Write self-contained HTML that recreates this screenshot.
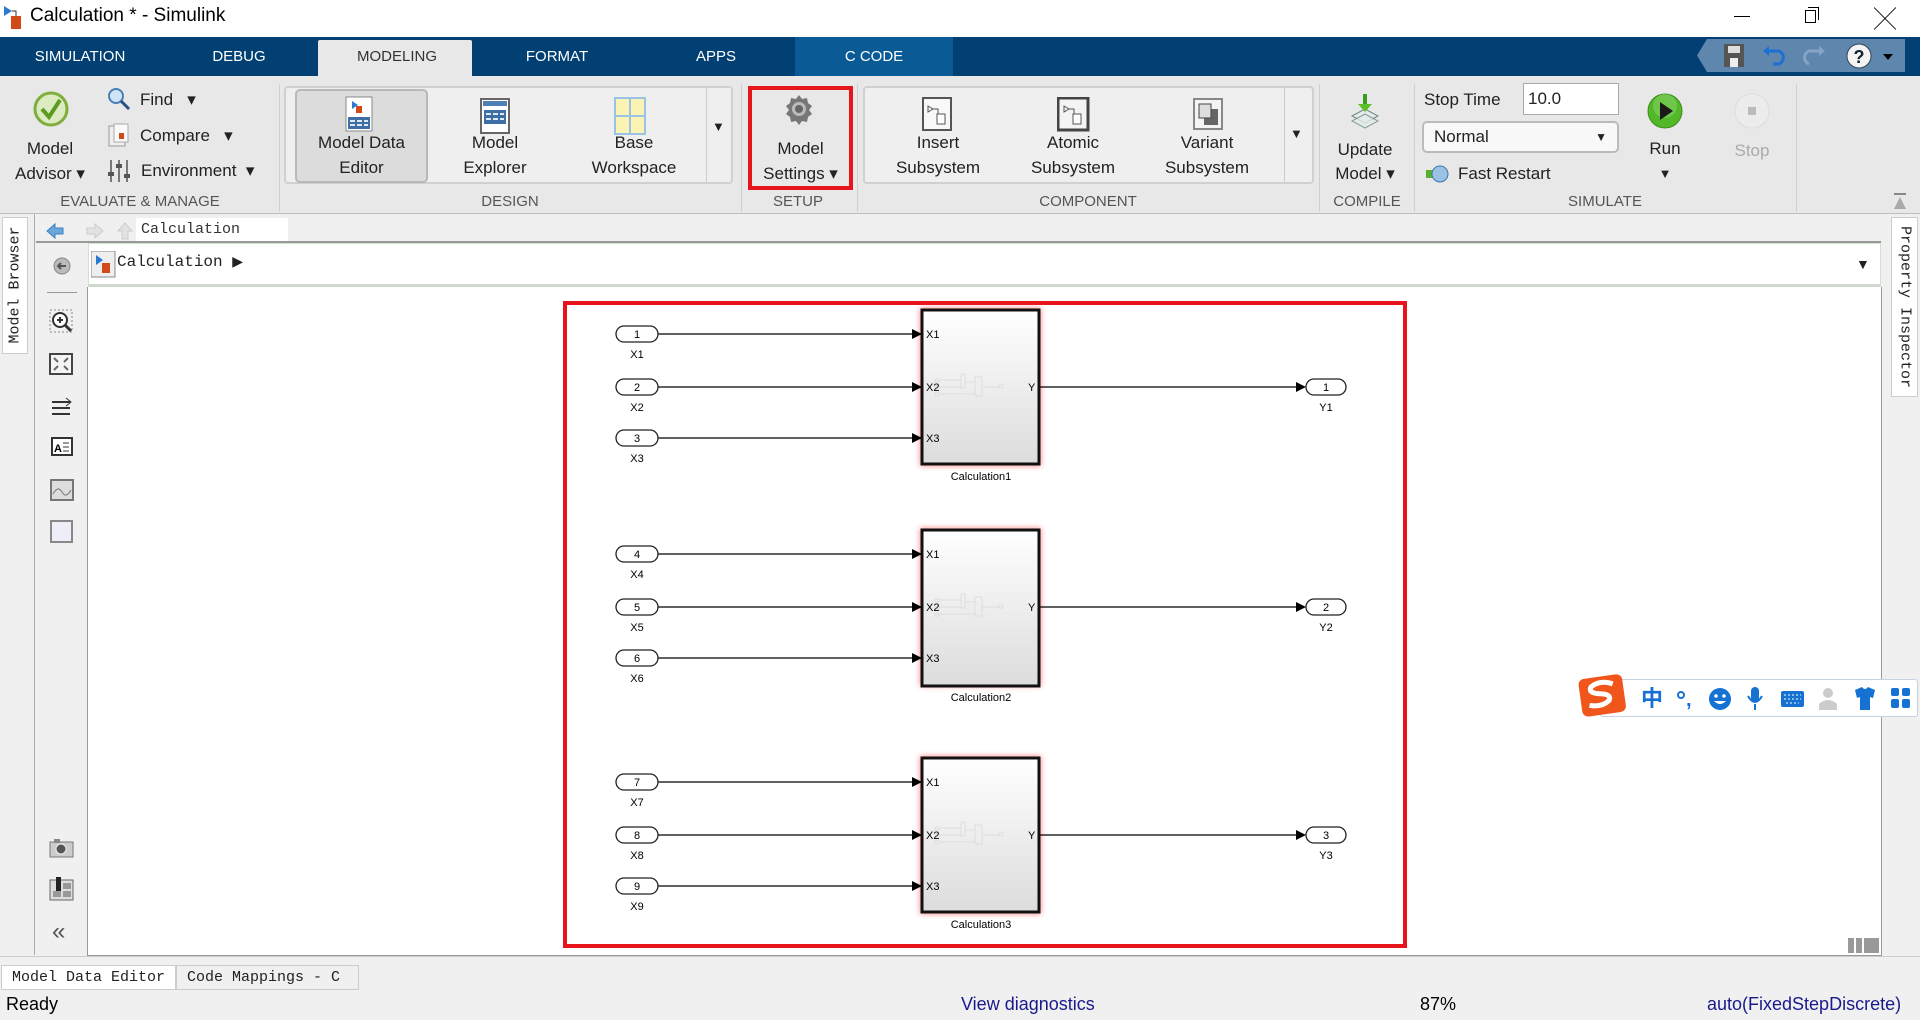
<!DOCTYPE html>
<html><head><meta charset="utf-8"><style>
*{margin:0;padding:0;box-sizing:border-box}
body{width:1920px;height:1020px;overflow:hidden;background:#f0f0f0;font-family:"Liberation Sans","Noto Sans CJK SC",sans-serif;position:relative;color:#222}
.a{position:absolute}
.t{position:absolute;font-size:17px;color:#222;text-align:center;line-height:24px;white-space:nowrap}
.lbl{position:absolute;top:193px;font-size:15px;color:#555;white-space:nowrap;transform:translateX(-50%)}
.tab{position:absolute;top:37px;height:39px;line-height:39px;color:#fff;font-size:15px;transform:translateX(-50%)}
.sep{position:absolute;top:84px;width:1px;height:128px;background:#d0d0d0}
.mono{font-family:"Liberation Mono",monospace}
</style></head><body>
<!-- title bar -->
<div class="a" style="left:0;top:0;width:1920px;height:37px;background:#fff"></div>
<svg class="a" style="left:2px;top:4px" width="24" height="26"><path d="M2 2 L10 7 L2 12Z" fill="#2a7ad0"/><rect x="9" y="12" width="10" height="13" fill="#d24a1a"/><path d="M10 7 H14 V12" stroke="#333" fill="none"/></svg>
<div class="a" style="left:30px;top:5px;font-size:19px;color:#000">Calculation * - Simulink</div>
<div class="a" style="left:1734px;top:16px;width:16px;height:1px;background:#000"></div>
<div class="a" style="left:1805px;top:10px;width:11px;height:13px;border:1px solid #000"></div>
<div class="a" style="left:1808px;top:7px;width:11px;height:13px;border-top:1px solid #000;border-right:1px solid #000"></div>
<div class="a" style="left:1874px;top:2px;font-size:22px;color:#000">╳</div>
<!-- tab bar -->
<div class="a" style="left:0;top:37px;width:1920px;height:39px;background:#023f72"></div>
<div class="a" style="left:318px;top:40px;width:154px;height:36px;background:#e8e8e8;border-radius:2px 2px 0 0"></div>
<div class="a" style="left:795px;top:37px;width:158px;height:39px;background:#0a5a96"></div>
<div class="tab" style="left:80px">SIMULATION</div>
<div class="tab" style="left:239px">DEBUG</div>
<div class="tab" style="left:397px;color:#333">MODELING</div>
<div class="tab" style="left:557px">FORMAT</div>
<div class="tab" style="left:716px">APPS</div>
<div class="tab" style="left:874px">C CODE</div>
<svg class="a" style="left:1697px;top:39px" width="220" height="35"><path d="M10 0 H208 V33 H10 L0 16.5Z" fill="#5f86ad"/>
<rect x="27" y="5" width="20" height="23" fill="#555"/><rect x="31" y="7" width="12" height="7" fill="#ddd"/><rect x="33" y="19" width="8" height="9" fill="#eee"/>
<path d="M70 12 H82 a7 7 0 0 1 0 13 H76" stroke="#1d6fd1" stroke-width="3" fill="none"/><path d="M66 12 L72 7 V17Z" fill="#1d6fd1"/>
<path d="M124 12 H112 a7 7 0 0 0 0 13" stroke="#85a5c6" stroke-width="3" fill="none"/><path d="M128 12 L122 7 V17Z" fill="#85a5c6"/>
<circle cx="162" cy="17" r="12" fill="#f4f4f4" stroke="#345" /><text x="162" y="24" font-size="18" font-weight="bold" text-anchor="middle" fill="#123">?</text>
<path d="M186 15 H196 L191 21Z" fill="#000"/></svg>
<!-- ribbon -->
<div class="a" style="left:0;top:76px;width:1920px;height:138px;background:#e8e8e8;border-bottom:1px solid #bdbdbd"></div>
<div class="sep" style="left:279px"></div><div class="sep" style="left:741px"></div><div class="sep" style="left:857px"></div><div class="sep" style="left:1319px"></div><div class="sep" style="left:1414px"></div><div class="sep" style="left:1796px"></div>
<svg class="a" style="left:33px;top:91px" width="36" height="36"><circle cx="18" cy="18" r="16" fill="#dcebc2" stroke="#7fae3c" stroke-width="3"/><path d="M9 18 L16 26 L27 9" stroke="#5c9c1f" stroke-width="4" fill="none"/></svg>
<div class="t" style="left:10px;top:137px;width:80px">Model</div>
<div class="t" style="left:4px;top:162px;width:92px">Advisor ▾</div>
<svg class="a" style="left:106px;top:86px" width="26" height="26"><circle cx="10" cy="10" r="7" fill="#cfe4f7" stroke="#4a7fb5" stroke-width="2"/><path d="M15 15 L23 23" stroke="#2a4f80" stroke-width="3"/></svg>
<div class="t" style="left:140px;top:88px;text-align:left">Find &nbsp;&nbsp;▾</div>
<svg class="a" style="left:106px;top:123px" width="26" height="26"><rect x="3" y="3" width="16" height="20" fill="#eee" stroke="#999"/><rect x="8" y="1" width="14" height="18" fill="#fafafa" stroke="#aaa"/><rect x="13" y="10" width="5" height="6" fill="#d24a1a"/></svg>
<div class="t" style="left:140px;top:124px;text-align:left">Compare &nbsp;&nbsp;▾</div>
<svg class="a" style="left:106px;top:158px" width="26" height="26"><path d="M5 2V24M13 2V24M21 2V24" stroke="#777" stroke-width="2"/><rect x="2" y="14" width="6" height="4" fill="#555"/><rect x="10" y="6" width="6" height="4" fill="#555"/><rect x="18" y="16" width="6" height="4" fill="#555"/></svg>
<div class="t" style="left:141px;top:159px;text-align:left">Environment &nbsp;▾</div>
<div class="lbl" style="left:140px">EVALUATE &amp; MANAGE</div>
<!-- design -->
<div class="a" style="left:284px;top:86px;width:449px;height:98px;border:2px solid #d0d0d0;border-radius:4px;background:#efefef"></div>
<div class="a" style="left:706px;top:88px;width:1px;height:94px;background:#ccc"></div>
<div class="a" style="left:295px;top:89px;width:133px;height:94px;background:#dcdcdc;border:2px solid #b8b8b8;border-radius:5px"></div>
<svg class="a" style="left:344px;top:95px" width="32" height="40"><rect x="2" y="2" width="26" height="34" fill="#fff" stroke="#888"/><path d="M8 6 L14 10 L8 14Z" fill="#2a7ad0"/><rect x="12" y="11" width="6" height="7" fill="#d24a1a"/><rect x="4" y="22" width="22" height="12" fill="#3d6fa5"/><path d="M6 26H24M6 30H24" stroke="#dfe9f5" stroke-width="2" stroke-dasharray="5 2"/></svg>
<div class="t" style="left:295px;top:131px;width:133px">Model Data</div><div class="t" style="left:295px;top:156px;width:133px">Editor</div>
<svg class="a" style="left:479px;top:97px" width="32" height="38"><rect x="2" y="2" width="28" height="34" fill="#fff" stroke="#666" stroke-width="2"/><rect x="4" y="4" width="24" height="5" fill="#4e7fb5"/><rect x="5" y="13" width="22" height="14" fill="#3d6fa5"/><path d="M7 17H25M7 22H25" stroke="#dfe9f5" stroke-width="2" stroke-dasharray="5 2"/></svg>
<div class="t" style="left:445px;top:131px;width:100px">Model</div><div class="t" style="left:445px;top:156px;width:100px">Explorer</div>
<svg class="a" style="left:614px;top:97px" width="32" height="38"><rect x="1" y="1" width="30" height="36" fill="#fbf3b4" stroke="#9ac3e6" stroke-width="2"/><path d="M16 1V37M1 19H31" stroke="#9ac3e6" stroke-width="2"/></svg>
<div class="t" style="left:584px;top:131px;width:100px">Base</div><div class="t" style="left:584px;top:156px;width:100px">Workspace</div>
<div class="a" style="left:712px;top:119px;font-size:13px">▼</div>
<div class="lbl" style="left:510px">DESIGN</div>
<!-- setup -->
<div class="a" style="left:748px;top:86px;width:105px;height:104px;border:4px solid #e8141c"></div>
<svg class="a" style="left:783px;top:93px" width="32" height="32" viewBox="0 0 32 32"><path d="M16 2l3 4 5-1 1 5 4 3-3 4 3 4-4 3-1 5-5-1-3 4-3-4-5 1-1-5-4-3 3-4-3-4 4-3 1-5 5 1z" fill="#777"/><circle cx="16" cy="16" r="7" fill="#bbb"/><circle cx="16" cy="16" r="4" fill="#666"/></svg>
<div class="t" style="left:748px;top:137px;width:105px">Model</div><div class="t" style="left:748px;top:162px;width:105px">Settings ▾</div>
<div class="lbl" style="left:798px">SETUP</div>
<!-- component -->
<div class="a" style="left:863px;top:86px;width:451px;height:98px;border:2px solid #d0d0d0;border-radius:4px;background:#efefef"></div>
<div class="a" style="left:1284px;top:88px;width:1px;height:94px;background:#ccc"></div>
<svg class="a" style="left:922px;top:97px" width="34" height="36"><rect x="1" y="1" width="28" height="32" fill="#f8f8f8" stroke="#555" stroke-width="2"/><path d="M6 9 L11 12 L6 15Z M11 12 H16 V17" stroke="#555" fill="none"/><rect x="15" y="17" width="8" height="10" fill="#fff" stroke="#555"/></svg>
<div class="t" style="left:883px;top:131px;width:110px">Insert</div><div class="t" style="left:883px;top:156px;width:110px">Subsystem</div>
<svg class="a" style="left:1057px;top:97px" width="34" height="36"><rect x="1" y="1" width="30" height="32" fill="#f4f4f4" stroke="#444" stroke-width="3"/><path d="M7 9 L12 12 L7 15Z M12 12 H17 V17" stroke="#555" fill="none"/><rect x="16" y="17" width="8" height="10" fill="#fff" stroke="#555"/></svg>
<div class="t" style="left:1018px;top:131px;width:110px">Atomic</div><div class="t" style="left:1018px;top:156px;width:110px">Subsystem</div>
<svg class="a" style="left:1193px;top:98px" width="32" height="34"><rect x="1" y="1" width="28" height="30" fill="#f4f4f4" stroke="#888" stroke-width="2"/><rect x="11" y="11" width="14" height="16" fill="#666"/><rect x="6" y="6" width="12" height="14" fill="#ddd" stroke="#444"/></svg>
<div class="t" style="left:1152px;top:131px;width:110px">Variant</div><div class="t" style="left:1152px;top:156px;width:110px">Subsystem</div>
<div class="a" style="left:1290px;top:126px;font-size:13px">▼</div>
<div class="lbl" style="left:1088px">COMPONENT</div>
<!-- compile -->
<svg class="a" style="left:1346px;top:92px" width="38" height="40"><path d="M6 24 L19 17 L32 24 L19 31Z" fill="#e3ece9" stroke="#6b8a86"/><path d="M6 29 L19 22 L32 29 L19 36Z" fill="#e3ece9" stroke="#6b8a86" opacity=".8"/><path d="M19 2V18" stroke="#3a9b1e" stroke-width="4"/><path d="M12 12 L19 20 L26 12Z" fill="#5cbf2a"/></svg>
<div class="t" style="left:1320px;top:138px;width:90px">Update</div><div class="t" style="left:1320px;top:162px;width:90px">Model ▾</div>
<div class="lbl" style="left:1367px">COMPILE</div>
<!-- simulate -->
<div class="t" style="left:1424px;top:88px">Stop Time</div>
<div class="a" style="left:1523px;top:83px;width:96px;height:32px;background:#fff;border:1px solid #aaa;font-size:17px;line-height:30px;padding-left:4px">10.0</div>
<div class="a" style="left:1422px;top:121px;width:197px;height:32px;background:#f8f8f8;border:2px solid #bbb;border-radius:5px;font-size:17px;line-height:28px;padding-left:10px">Normal<span style="position:absolute;right:10px;font-size:12px">▼</span></div>
<svg class="a" style="left:1425px;top:164px" width="26" height="20"><rect x="1" y="6" width="8" height="8" fill="#5cae2e"/><circle cx="15" cy="10" r="8" fill="#9bc1e4" stroke="#3e78b0"/></svg>
<div class="t" style="left:1458px;top:162px;text-align:left">Fast Restart</div>
<svg class="a" style="left:1646px;top:92px" width="38" height="38"><circle cx="19" cy="19" r="17" fill="#52b82a" stroke="#3a8d1a"/><circle cx="19" cy="14" r="12" fill="#8ed36a" opacity=".5"/><path d="M14 10 L27 19 L14 28Z" fill="#1a1a1a"/></svg>
<div class="t" style="left:1640px;top:137px;width:50px">Run</div><div class="t" style="left:1640px;top:162px;width:50px;font-size:13px">▼</div>
<svg class="a" style="left:1733px;top:92px" width="38" height="38"><circle cx="19" cy="19" r="17" fill="#ececec" stroke="#ddd"/><rect x="15" y="15" width="8" height="8" fill="#bbb"/></svg>
<div class="t" style="left:1727px;top:139px;width:50px;color:#aaa">Stop</div>
<div class="lbl" style="left:1605px">SIMULATE</div>
<svg class="a" style="left:1892px;top:193px" width="16" height="18"><rect x="2" y="0" width="12" height="2" fill="#888"/><path d="M2 16 L8 4 L14 16Z" fill="#aaa"/></svg>
<!-- left browser tab -->
<div class="a" style="left:2px;top:217px;width:26px;height:137px;background:#fff;border:1px solid #ccc"></div>
<div class="a mono" style="left:15px;top:285px;transform:translate(-50%,-50%) rotate(-90deg);font-size:15px;white-space:nowrap">Model Browser</div>
<div class="a" style="left:34px;top:214px;width:1px;height:741px;background:#aaa"></div>
<!-- address row -->
<svg class="a" style="left:45px;top:221px" width="110" height="20"><path d="M2 10 L10 3 V7 H18 V13 H10 V17Z" fill="#6aa8dc" stroke="#3b7fc0"/><path d="M58 10 L50 3 V7 H42 V13 H50 V17Z" fill="#e2e2e2" stroke="#ccc"/><path d="M80 2 L87 10 H83 V18 H77 V10 H73Z" fill="#e2e2e2" stroke="#ccc"/></svg>
<div class="a mono" style="left:136px;top:218px;height:24px;background:#fff;font-size:15px;line-height:24px;padding-left:5px;color:#333;width:152px">Calculation</div>
<div class="a" style="left:36px;top:241px;width:1845px;height:2px;background:#999"></div>
<div class="a" style="left:88px;top:243px;width:1793px;height:44px;background:#fff;border:1px solid #cfe3cf;border-bottom:3px solid #cfdacf"></div>
<svg class="a" style="left:91px;top:251px" width="26" height="28"><rect x="0" y="0" width="24" height="26" fill="#eee" stroke="#888"/><path d="M5 4 L12 9 L5 14Z" fill="#2a7ad0"/><rect x="11" y="12" width="8" height="10" fill="#d24a1a"/></svg>
<div class="a mono" style="left:117px;top:253px;font-size:16px">Calculation <span style="font-family:'Liberation Sans';font-size:14px">▶</span></div>
<div class="a" style="left:1856px;top:256px;font-size:14px">▼</div>
<!-- left toolbar -->
<svg class="a" style="left:50px;top:254px" width="24" height="24"><circle cx="12" cy="12" r="8" fill="#bbb" stroke="#888"/><path d="M16 12 H8 M11 9 L8 12 L11 15" stroke="#555" stroke-width="2" fill="none"/></svg>
<div class="a" style="left:47px;top:292px;width:30px;height:1px;background:#999"></div>
<svg class="a" style="left:48px;top:308px" width="28" height="28"><rect x="2" y="2" width="22" height="22" fill="none" stroke="#888" stroke-dasharray="2 2"/><circle cx="12" cy="12" r="7" fill="#fff" stroke="#333" stroke-width="2"/><path d="M9 12H15M12 9V15" stroke="#333" stroke-width="2"/><path d="M17 17 L23 23" stroke="#333" stroke-width="3"/></svg>
<svg class="a" style="left:49px;top:353px" width="26" height="24"><rect x="1" y="1" width="22" height="20" fill="#f4f4f4" stroke="#444" stroke-width="2"/><path d="M5 5 L9 9M19 5 L15 9M5 17 L9 13M19 17 L15 13" stroke="#666" stroke-width="2"/></svg>
<svg class="a" style="left:50px;top:396px" width="26" height="20"><path d="M2 6H20M2 12H20M2 18H20" stroke="#333" stroke-width="2"/><path d="M16 2 L21 6 L16 10" stroke="#333" fill="none"/></svg>
<svg class="a" style="left:51px;top:437px" width="22" height="20"><rect x="1" y="1" width="20" height="17" fill="#fff" stroke="#333" stroke-width="2"/><text x="3" y="15" font-size="11" font-weight="bold" font-family="Liberation Sans">A</text><path d="M12 6H18M12 10H18M12 14H18" stroke="#333"/></svg>
<svg class="a" style="left:50px;top:479px" width="24" height="22"><rect x="1" y="1" width="22" height="20" fill="#ddd" stroke="#777" stroke-width="2"/><path d="M3 15 Q8 6 12 13 T21 11" stroke="#777" fill="none"/></svg>
<svg class="a" style="left:50px;top:520px" width="24" height="23"><rect x="1" y="1" width="21" height="21" fill="#eeeef8" stroke="#888" stroke-width="2"/></svg>
<svg class="a" style="left:49px;top:838px" width="26" height="20"><rect x="1" y="4" width="23" height="15" fill="#ccc" stroke="#777"/><rect x="5" y="1" width="6" height="4" fill="#888"/><circle cx="12" cy="11" r="5" fill="#555" stroke="#eee"/></svg>
<svg class="a" style="left:49px;top:877px" width="26" height="24"><rect x="1" y="3" width="23" height="20" fill="#ddd" stroke="#666"/><rect x="7" y="0" width="5" height="14" fill="#222"/><rect x="14" y="6" width="8" height="6" fill="#999"/><rect x="14" y="14" width="8" height="6" fill="#999"/><rect x="4" y="14" width="8" height="6" fill="#999"/></svg>
<div class="a" style="left:52px;top:918px;font-size:24px;color:#555">«</div>
<!-- canvas -->
<div class="a" style="left:87px;top:287px;width:1795px;height:669px;background:#fff;border-left:1px solid #999;border-right:1px solid #999;border-bottom:1px solid #999"></div>
<svg class="a" style="left:1848px;top:938px" width="32" height="16"><rect x="0" y="0" width="6" height="15" fill="#999"/><rect x="8" y="0" width="6" height="15" fill="#999"/><rect x="16" y="0" width="15" height="15" fill="#999"/></svg>
<!-- property inspector tab -->
<div class="a" style="left:1891px;top:217px;width:27px;height:180px;background:#fff;border:1px solid #ccc"></div>
<div class="a mono" style="left:1905px;top:307px;transform:translate(-50%,-50%) rotate(90deg);font-size:15px;white-space:nowrap">Property Inspector</div>
<!-- diagram -->
<svg class="a" style="left:0;top:0" width="1920" height="1020" font-family="Liberation Sans" font-size="11">
<defs><linearGradient id="g" x1="0" y1="0" x2="0" y2="1"><stop offset="0" stop-color="#fff"/><stop offset="1" stop-color="#dcdcdc"/></linearGradient>
<filter id="gl" x="-20%" y="-20%" width="140%" height="140%"><feGaussianBlur stdDeviation="3"/></filter>
<g id="inner" stroke="#ddd" fill="none"><rect x="0" y="-1" width="4" height="3"/><rect x="0" y="6" width="4" height="3"/><rect x="0" y="13" width="4" height="3"/><path d="M4 0H26M4 7H26M4 14H40M26 0V7"/><rect x="26" y="-6" width="4" height="14"/><path d="M30 2H40"/><rect x="40" y="-3" width="7" height="19"/><path d="M47 7H64"/><rect x="64" y="5" width="4" height="3"/></g></defs>
<rect x="565" y="303" width="840" height="643" fill="none" stroke="#e8141c" stroke-width="4"/>
<g id="b1">
<rect x="920" y="308" width="121" height="158" fill="#ff6a6a" filter="url(#gl)" opacity=".8"/>
<rect x="922" y="310" width="117" height="154" fill="url(#g)" stroke="#111" stroke-width="3"/>
<use href="#inner" x="935" y="380"/>
<text x="926" y="338">X1</text><text x="926" y="391">X2</text><text x="926" y="442">X3</text><text x="1028" y="391">Y</text>
<text x="981" y="480" text-anchor="middle">Calculation1</text>
<g stroke="#000" stroke-width="1.3"><path d="M658 334H912M658 387H912M658 438H912M1040 387H1296"/></g>
<path d="M912 329L922 334L912 339ZM912 382L922 387L912 392ZM912 433L922 438L912 443ZM1296 382L1306 387L1296 392Z" fill="#000"/>
<g fill="#fff" stroke="#222" stroke-width="1.3"><rect x="616" y="326" width="42" height="16" rx="8"/><rect x="616" y="379" width="42" height="16" rx="8"/><rect x="616" y="430" width="42" height="16" rx="8"/><rect x="1306" y="379" width="40" height="16" rx="8"/></g>
<g text-anchor="middle"><text x="637" y="338">1</text><text x="637" y="391">2</text><text x="637" y="442">3</text><text x="1326" y="391">1</text>
<text x="637" y="358">X1</text><text x="637" y="411">X2</text><text x="637" y="462">X3</text><text x="1326" y="411">Y1</text></g>
</g>
<g transform="translate(0,220)">
<rect x="920" y="308" width="121" height="158" fill="#ff6a6a" filter="url(#gl)" opacity=".8"/>
<rect x="922" y="310" width="117" height="156" fill="url(#g)" stroke="#111" stroke-width="3"/>
<use href="#inner" x="935" y="380"/>
<text x="926" y="338">X1</text><text x="926" y="391">X2</text><text x="926" y="442">X3</text><text x="1028" y="391">Y</text>
<text x="981" y="481" text-anchor="middle">Calculation2</text>
<g stroke="#000" stroke-width="1.3"><path d="M658 334H912M658 387H912M658 438H912M1040 387H1296"/></g>
<path d="M912 329L922 334L912 339ZM912 382L922 387L912 392ZM912 433L922 438L912 443ZM1296 382L1306 387L1296 392Z" fill="#000"/>
<g fill="#fff" stroke="#222" stroke-width="1.3"><rect x="616" y="326" width="42" height="16" rx="8"/><rect x="616" y="379" width="42" height="16" rx="8"/><rect x="616" y="430" width="42" height="16" rx="8"/><rect x="1306" y="379" width="40" height="16" rx="8"/></g>
<g text-anchor="middle"><text x="637" y="338">4</text><text x="637" y="391">5</text><text x="637" y="442">6</text><text x="1326" y="391">2</text>
<text x="637" y="358">X4</text><text x="637" y="411">X5</text><text x="637" y="462">X6</text><text x="1326" y="411">Y2</text></g>
</g>
<g transform="translate(0,448)">
<rect x="920" y="308" width="121" height="158" fill="#ff6a6a" filter="url(#gl)" opacity=".8"/>
<rect x="922" y="310" width="117" height="154" fill="url(#g)" stroke="#111" stroke-width="3"/>
<use href="#inner" x="935" y="380"/>
<text x="926" y="338">X1</text><text x="926" y="391">X2</text><text x="926" y="442">X3</text><text x="1028" y="391">Y</text>
<text x="981" y="480" text-anchor="middle">Calculation3</text>
<g stroke="#000" stroke-width="1.3"><path d="M658 334H912M658 387H912M658 438H912M1040 387H1296"/></g>
<path d="M912 329L922 334L912 339ZM912 382L922 387L912 392ZM912 433L922 438L912 443ZM1296 382L1306 387L1296 392Z" fill="#000"/>
<g fill="#fff" stroke="#222" stroke-width="1.3"><rect x="616" y="326" width="42" height="16" rx="8"/><rect x="616" y="379" width="42" height="16" rx="8"/><rect x="616" y="430" width="42" height="16" rx="8"/><rect x="1306" y="379" width="40" height="16" rx="8"/></g>
<g text-anchor="middle"><text x="637" y="338">7</text><text x="637" y="391">8</text><text x="637" y="442">9</text><text x="1326" y="391">3</text>
<text x="637" y="358">X7</text><text x="637" y="411">X8</text><text x="637" y="462">X9</text><text x="1326" y="411">Y3</text></g>
</g>
</svg>
<!-- IME bar -->
<div class="a" style="left:1600px;top:679px;height:38px;background:#fff;border:1px solid #c8d3e0;border-radius:3px;width:318px"></div>
<svg class="a" style="left:1574px;top:672px" width="346" height="50">
<g transform="rotate(-8 24 22)"><rect x="6" y="5" width="44" height="38" rx="6" fill="#f0561c"/><path d="M40 14 Q28 8 18 14 Q14 20 26 22 Q38 24 34 30 Q26 36 14 32" stroke="#fff" stroke-width="5" fill="none"/></g>
<g transform="translate(-15,0)">
<text x="82" y="34" font-size="22" font-weight="bold" fill="#1572d3" font-family="Noto Sans CJK SC">中</text>
<circle cx="122" cy="23" r="3" fill="none" stroke="#1572d3" stroke-width="2"/><text x="127" y="34" font-size="20" font-weight="bold" fill="#1572d3">,</text>
<circle cx="161" cy="27" r="11" fill="#1572d3"/><circle cx="157" cy="24" r="1.8" fill="#fff"/><circle cx="165" cy="24" r="1.8" fill="#fff"/><path d="M155 29 Q161 35 167 29Z" fill="#fff"/>
<rect x="192" y="15" width="8" height="15" rx="4" fill="#1572d3"/><path d="M189 24 Q196 36 203 24M196 32V38" stroke="#1572d3" stroke-width="2" fill="none"/>
<rect x="222" y="19" width="23" height="16" rx="2" fill="#1572d3"/><path d="M225 23H242M225 27H242M227 31H240" stroke="#fff" stroke-dasharray="2 2"/>
<circle cx="269" cy="21" r="5" fill="#ccc"/><path d="M260 38 V32 Q269 24 278 32 V38Z" fill="#ccc"/>
<path d="M296 18 L303 15 Q306 19 309 15 L316 18 L314 26 L311 25 V38 H301 V25 L298 26Z" fill="#1572d3"/>
<rect x="332" y="16" width="8" height="8" rx="2" fill="#1572d3"/><rect x="343" y="16" width="8" height="8" rx="2" fill="#1572d3"/><rect x="332" y="27" width="8" height="9" rx="2" fill="#1572d3"/><rect x="343" y="27" width="8" height="9" rx="2" fill="#1572d3"/>
</g>
</svg>
<!-- bottom tabs -->
<div class="a" style="left:0;top:956px;width:1920px;height:1px;background:#ccc"></div>
<div class="a mono" style="left:1px;top:965px;width:175px;height:25px;background:#fff;border:1px solid #ccc;font-size:15px;line-height:24px;padding-left:10px">Model Data Editor</div>
<div class="a mono" style="left:176px;top:965px;width:183px;height:25px;background:#f0f0f0;border:1px solid #ccc;font-size:15px;line-height:24px;padding-left:10px">Code Mappings - C</div>
<div class="a" style="left:6px;top:994px;font-size:18px;color:#000">Ready</div>
<div class="a" style="left:961px;top:994px;font-size:18px;color:#1a1a8c">View diagnostics</div>
<div class="a" style="left:1420px;top:994px;font-size:18px;color:#000">87%</div>
<div class="a" style="left:1707px;top:994px;font-size:18px;color:#1a1a8c">auto(FixedStepDiscrete)</div>
</body></html>
